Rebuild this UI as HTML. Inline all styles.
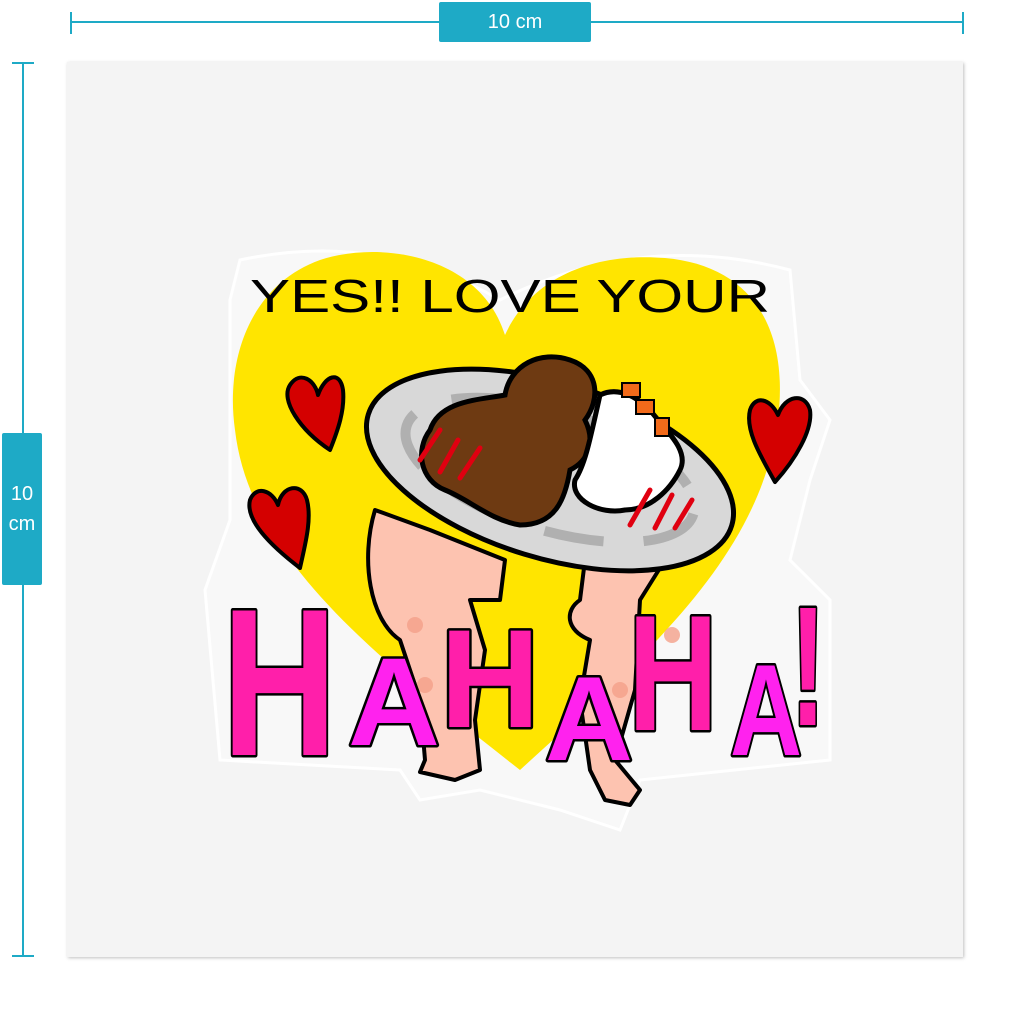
<!DOCTYPE html>
<html><head><meta charset="utf-8"><style>
html,body{margin:0;padding:0;background:#fff;width:1024px;height:1024px;overflow:hidden;font-family:"Liberation Sans",sans-serif}
.lab{position:absolute;background:#1eaac6;color:#fff;font-size:20px;display:flex;align-items:center;justify-content:center;text-align:center;border-radius:2px;line-height:30px}
</style></head><body>
<svg width="1024" height="1024" style="position:absolute;left:0;top:0">
<defs><filter id="sh"><feDropShadow dx="1" dy="1" stdDeviation="1.5" flood-opacity="0.25"/></filter></defs>
<g stroke="#1eaac6" stroke-width="2">
<line x1="71" y1="22" x2="963" y2="22"/><line x1="71" y1="12" x2="71" y2="34"/><line x1="963" y1="12" x2="963" y2="34"/>
<line x1="23" y1="63" x2="23" y2="956"/><line x1="12" y1="63" x2="34" y2="63"/><line x1="12" y1="956" x2="34" y2="956"/>
</g>
<rect x="67" y="62" width="896" height="895" fill="#f4f4f4" filter="url(#sh)"/>
<!-- sticker outline -->
<path d="M240 260 Q380 230 500 300 Q640 230 790 270 L800 380 L830 420 L810 480 L790 560 L830 600 L830 760 L640 780 L620 830 L560 810 L480 790 L420 800 L400 770 L220 760 L205 590 L230 520 L230 300 Z" fill="#f8f8f8" stroke="#fff" stroke-width="3"/>
<!-- heart -->
<path d="M505 335 C480 255 380 240 320 260 C250 285 225 360 235 430 C250 560 380 660 520 770 C640 660 760 560 778 420 C790 320 745 265 665 258 C590 252 530 280 505 335 Z" fill="#ffe500"/>
<!-- small hearts -->
<g fill="#d40000" stroke="#000" stroke-width="4" stroke-linejoin="round">
<path d="M330 450 C300 430 280 400 290 385 C300 370 315 380 318 395 C325 375 340 370 343 390 C345 410 338 430 330 450Z"/>
<path d="M300 568 C270 545 245 520 250 500 C256 485 272 490 278 505 C282 485 302 482 307 500 C312 520 305 545 300 568Z"/>
<path d="M775 482 C760 455 745 430 750 410 C755 395 770 398 778 415 C785 395 805 392 810 410 C813 430 795 460 775 482Z"/>
</g>
<!-- legs -->
<g fill="#fdc3b0" stroke="#000" stroke-width="4" stroke-linejoin="round">
<path d="M375 510 C360 560 370 620 400 640 L420 700 L425 760 L420 772 L455 780 L480 770 L475 720 L485 650 L470 600 L500 600 L505 560 L430 530 Z"/>
<path d="M585 560 L580 600 C565 610 565 630 590 640 L580 700 L590 770 L605 800 L630 805 L640 790 L615 760 L635 690 L640 600 L665 560 Z"/>
</g>
<g fill="#f4a08a" opacity="0.8"><circle cx="415" cy="625" r="8"/><circle cx="425" cy="685" r="8"/><circle cx="620" cy="690" r="8"/><circle cx="672" cy="635" r="8"/></g>
<!-- plate -->
<g transform="rotate(17 550 470)">
<ellipse cx="550" cy="470" rx="190" ry="88" fill="#d8d8d8" stroke="#000" stroke-width="5"/>
<ellipse cx="550" cy="470" rx="150" ry="60" fill="none" stroke="#b0b0b0" stroke-width="10" stroke-dasharray="60 40"/>
</g>
<!-- curry -->
<path d="M430 430 C440 400 480 400 505 395 C510 365 540 350 570 360 C600 370 600 400 585 420 C595 440 590 460 570 470 C565 500 555 525 520 525 C490 520 470 500 445 490 C420 480 415 450 430 430Z" fill="#6e3a12" stroke="#000" stroke-width="5"/>
<!-- rice -->
<path d="M600 395 C620 385 640 400 650 410 C665 430 690 450 680 470 C670 490 650 510 625 510 C600 515 570 500 575 480 C585 465 590 440 600 395Z" fill="#fff" stroke="#000" stroke-width="5"/>
<g fill="#f26a1a" stroke="#000" stroke-width="2"><rect x="622" y="383" width="18" height="14"/><rect x="636" y="400" width="18" height="14"/><rect x="655" y="418" width="14" height="18"/></g>
<g stroke="#e00010" stroke-width="5" stroke-linecap="round" fill="none">
<path d="M420 460 L440 430 M440 472 L458 440 M460 478 L480 448"/>
<path d="M630 525 L650 490 M655 528 L672 495 M675 528 L692 500"/>
</g>
<text x="510" y="312" text-anchor="middle" font-family="Liberation Sans" font-size="46" fill="#000" textLength="520" lengthAdjust="spacingAndGlyphs" style="font-weight:400">YES!! LOVE YOUR</text>
<g font-family="Liberation Sans" font-weight="bold" stroke="#000" stroke-width="5" style="paint-order:stroke" stroke-linejoin="round">
<text x="222" y="755" font-size="210" fill="#ff1faa" textLength="115" lengthAdjust="spacingAndGlyphs">H</text>
<text x="348" y="745" font-size="125" fill="#ff22ee" textLength="92" lengthAdjust="spacingAndGlyphs">A</text>
<text x="440" y="727" font-size="140" fill="#ff1faa" textLength="100" lengthAdjust="spacingAndGlyphs">H</text>
<text x="545" y="760" font-size="120" fill="#ff22ee" textLength="88" lengthAdjust="spacingAndGlyphs">A</text>
<text x="628" y="730" font-size="165" fill="#ff1faa" textLength="90" lengthAdjust="spacingAndGlyphs">H</text>
<text x="730" y="755" font-size="130" fill="#ff22ee" textLength="72" lengthAdjust="spacingAndGlyphs">A</text>
<text x="790" y="725" font-size="170" fill="#ff1faa" textLength="36" lengthAdjust="spacingAndGlyphs">!</text>
</g>
</svg>
<div class="lab" style="left:439px;top:2px;width:152px;height:40px">10 cm</div>
<div class="lab" style="left:2px;top:433px;width:40px;height:152px;line-height:30px">10<br>cm</div>
</body></html>
